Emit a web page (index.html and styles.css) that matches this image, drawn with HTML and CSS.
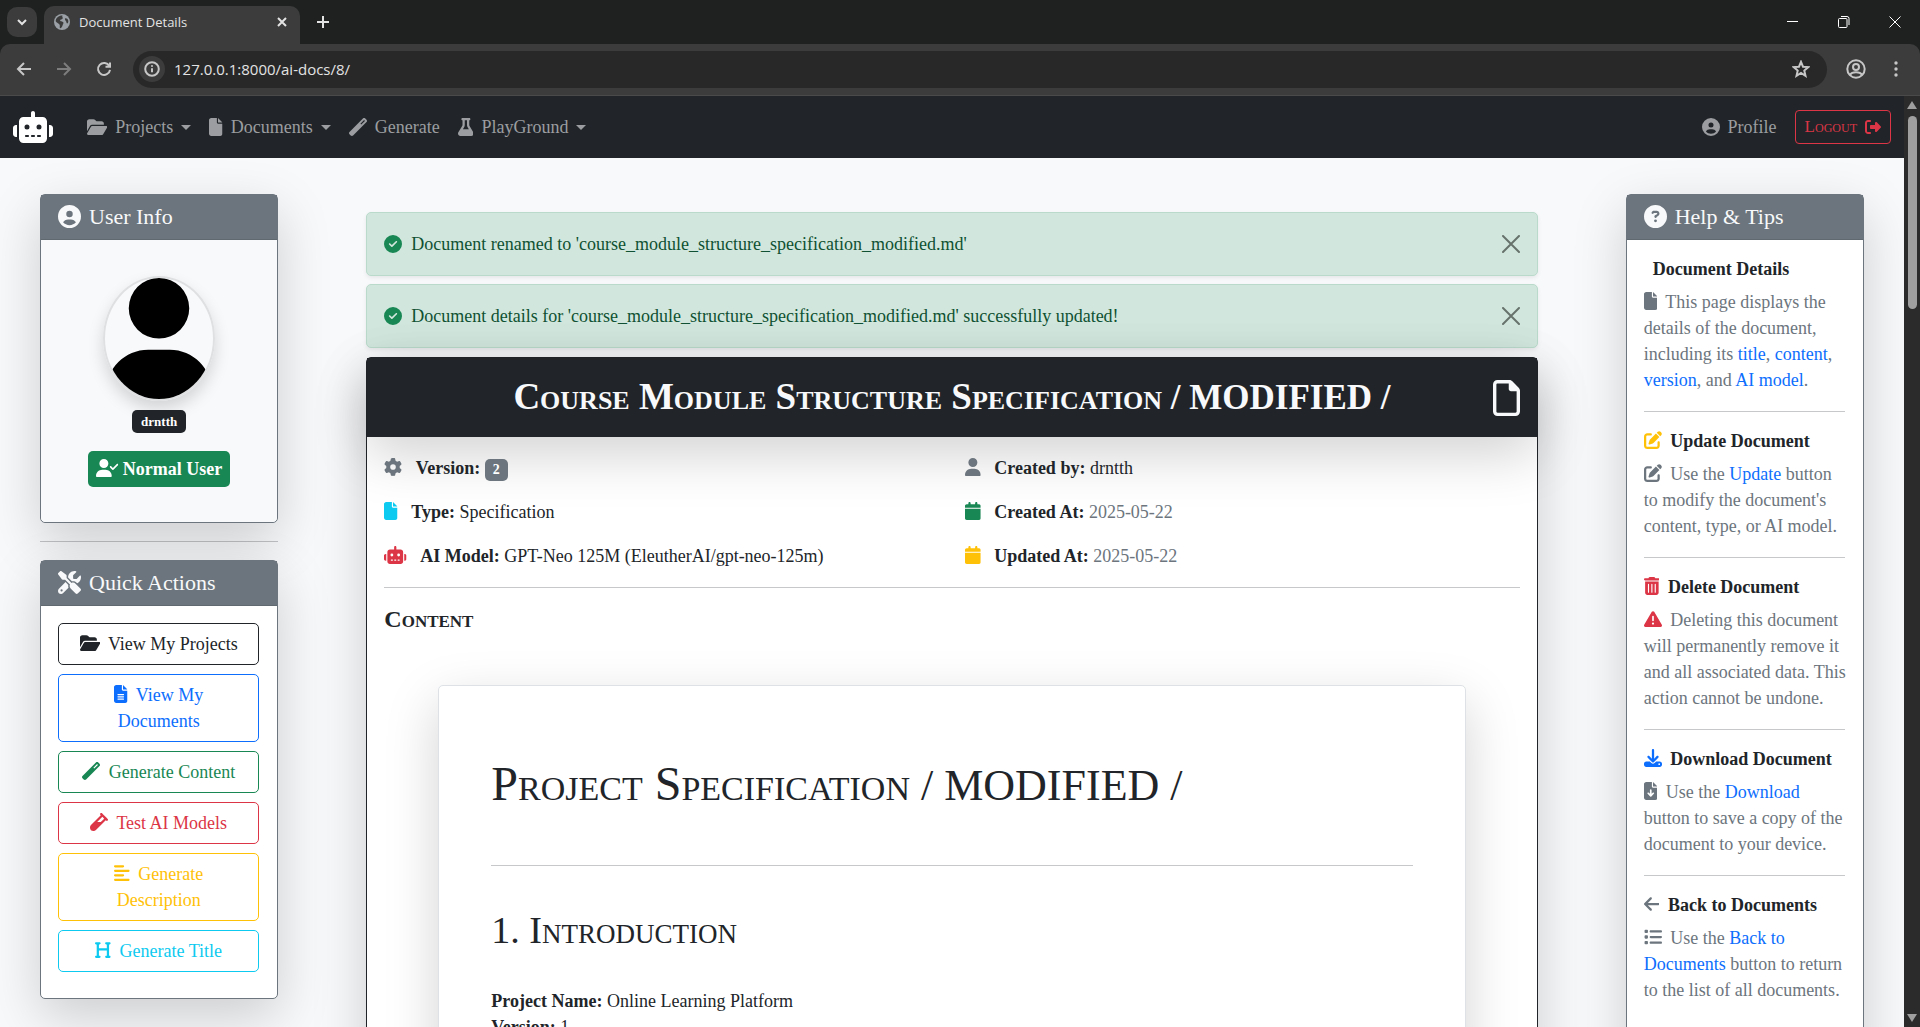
FILE: index.html
```html
<!DOCTYPE html>
<html lang="en">
<head>
<meta charset="utf-8">
<meta name="viewport" content="width=device-width, initial-scale=1">
<title>Document Details</title>
<link rel="stylesheet" href="styles.css">
</head>
<body>
<svg class="sprite" aria-hidden="true">
  <symbol id="robot" viewBox="0 0 640 512"><path d="M320 0c17.7 0 32 14.3 32 32V96H472c39.8 0 72 32.2 72 72V440c0 39.8-32.2 72-72 72H168c-39.8 0-72-32.2-72-72V168c0-39.8 32.2-72 72-72H288V32c0-17.7 14.3-32 32-32zM208 384c-8.8 0-16 7.2-16 16s7.2 16 16 16h32c8.8 0 16-7.2 16-16s-7.2-16-16-16H208zm96 0c-8.8 0-16 7.2-16 16s7.2 16 16 16h32c8.8 0 16-7.2 16-16s-7.2-16-16-16H304zm96 0c-8.8 0-16 7.2-16 16s7.2 16 16 16h32c8.8 0 16-7.2 16-16s-7.2-16-16-16H400zM264 256a40 40 0 1 0 -80 0 40 40 0 1 0 80 0zm152 40a40 40 0 1 0 0-80 40 40 0 1 0 0 80zM48 224H64V416H48c-26.5 0-48-21.5-48-48V272c0-26.5 21.5-48 48-48zm544 0c26.5 0 48 21.5 48 48v96c0 26.5-21.5 48-48 48H576V224h16z"/></symbol>
  <symbol id="folder-open" viewBox="0 0 576 512"><path d="M88.7 223.8L0 375.8V96C0 60.7 28.7 32 64 32H181.5c17 0 33.3 6.7 45.3 18.7l26.5 26.5c12 12 28.3 18.7 45.3 18.7H416c35.3 0 64 28.7 64 64v32H144c-22.8 0-43.8 12.1-55.3 31.8zm27.6 16.1C122.1 230 132.6 224 144 224H544c11.5 0 22 6.1 27.7 16.1s5.7 22.2-.1 32.1l-112 192C453.9 474 443.4 480 432 480H32c-11.5 0-22-6.1-27.7-16.1s-5.7-22.2 .1-32.1l112-192z"/></symbol>
  <symbol id="file" viewBox="0 0 384 512"><path d="M0 64C0 28.7 28.7 0 64 0H224V128c0 17.7 14.3 32 32 32H384V448c0 35.3-28.7 64-64 64H64c-35.3 0-64-28.7-64-64V64zm384 64H256V0L384 128z"/></symbol>
  <symbol id="file-lines" viewBox="0 0 384 512"><path d="M64 0C28.7 0 0 28.7 0 64V448c0 35.3 28.7 64 64 64H320c35.3 0 64-28.7 64-64V160H256c-17.7 0-32-14.3-32-32V0H64zM256 0V128H384L256 0zM112 256H272c8.8 0 16 7.2 16 16s-7.2 16-16 16H112c-8.8 0-16-7.2-16-16s7.2-16 16-16zm0 64H272c8.8 0 16 7.2 16 16s-7.2 16-16 16H112c-8.8 0-16-7.2-16-16s7.2-16 16-16zm0 64H272c8.8 0 16 7.2 16 16s-7.2 16-16 16H112c-8.8 0-16-7.2-16-16s7.2-16 16-16z"/></symbol>
  <symbol id="file-outline" viewBox="0 0 384 512"><path d="M320 464c8.8 0 16-7.2 16-16V160H256c-17.7 0-32-14.3-32-32V48H64c-8.8 0-16 7.2-16 16V448c0 8.8 7.2 16 16 16H320zM0 64C0 28.7 28.7 0 64 0H229.5c17 0 33.3 6.7 45.3 18.7l90.5 90.5c12 12 18.7 28.3 18.7 45.3V448c0 35.3-28.7 64-64 64H64c-35.3 0-64-28.7-64-64V64z"/></symbol>
  <symbol id="file-down" viewBox="0 0 384 512"><path d="M64 0C28.7 0 0 28.7 0 64V448c0 35.3 28.7 64 64 64H320c35.3 0 64-28.7 64-64V160H256c-17.7 0-32-14.3-32-32V0H64zM256 0V128H384L256 0zM216 232V334.1l31-31c9.4-9.4 24.6-9.4 33.9 0s9.4 24.6 0 33.9l-72 72c-9.4 9.4-24.6 9.4-33.9 0l-72-72c-9.4-9.4-9.4-24.6 0-33.9s24.6-9.4 33.9 0l31 31V232c0-13.3 10.7-24 24-24s24 10.7 24 24z"/></symbol>
  <symbol id="wand" viewBox="0 0 512 512"><path d="M14.1 463.3c-18.7-18.7-18.7-49.1 0-67.9L395.4 14.1c18.7-18.7 49.1-18.7 67.9 0l34.6 34.6c18.7 18.7 18.7 49.1 0 67.9L116.5 497.9c-18.7 18.7-49.1 18.7-67.9 0L14.1 463.3zM347.6 187.6l105-105L429.4 59.3l-105 105 23.3 23.3z"/></symbol>
  <symbol id="flask" viewBox="0 0 448 512"><path d="M288 0H160 128C110.3 0 96 14.3 96 32s14.3 32 32 32V196.8c0 11.8-3.3 23.5-9.5 33.5L10.3 406.2C3.6 417.2 0 429.7 0 442.6C0 480.9 31.1 512 69.4 512H378.6c38.3 0 69.4-31.1 69.4-69.4c0-12.8-3.6-25.4-10.3-36.4L329.5 230.4c-6.2-10.1-9.5-21.7-9.5-33.5V64c17.7 0 32-14.3 32-32s-14.3-32-32-32H288zM192 196.8V64h64V196.8c0 23.7 6.6 46.9 19 67.1L309.5 320h-171L173 263.9c12.4-20.2 19-43.4 19-67.1z"/></symbol>
  <symbol id="circle-user" viewBox="0 0 512 512"><path d="M399 384.2C376.9 345.8 335.4 320 288 320H224c-47.4 0-88.9 25.8-111 64.2c35.2 39.2 86.2 63.8 143 63.8s107.8-24.7 143-63.8zM0 256a256 256 0 1 1 512 0A256 256 0 1 1 0 256zm256 16a72 72 0 1 0 0-144 72 72 0 1 0 0 144z"/></symbol>
  <symbol id="sign-out" viewBox="0 0 512 512"><path d="M377.9 105.9L500.7 228.7c7.2 7.2 11.3 17.1 11.3 27.3s-4.1 20.1-11.3 27.3L377.9 406.1c-6.4 6.4-15 9.9-24 9.9c-18.7 0-33.9-15.2-33.9-33.9l0-62.1-128 0c-17.7 0-32-14.3-32-32l0-64c0-17.7 14.3-32 32-32l128 0 0-62.1c0-18.7 15.2-33.9 33.9-33.9c9 0 17.6 3.6 24 9.9zM160 96L96 96c-17.7 0-32 14.3-32 32l0 256c0 17.7 14.3 32 32 32l64 0c17.7 0 32 14.3 32 32s-14.3 32-32 32l-64 0c-53 0-96-43-96-96L0 128C0 75 43 32 96 32l64 0c17.7 0 32 14.3 32 32s-14.3 32-32 32z"/></symbol>
  <symbol id="user" viewBox="0 0 448 512"><path d="M224 256A128 128 0 1 0 224 0a128 128 0 1 0 0 256zm-45.7 48C79.8 304 0 383.8 0 482.3C0 498.7 13.3 512 29.7 512H418.3c16.4 0 29.7-13.3 29.7-29.7C448 383.8 368.2 304 269.7 304H178.3z"/></symbol>
  <symbol id="user-check" viewBox="0 0 640 512"><path d="M96 128a128 128 0 1 1 256 0A128 128 0 1 1 96 128zM0 482.3C0 383.8 79.8 304 178.3 304h91.4C368.2 304 448 383.8 448 482.3c0 16.4-13.3 29.7-29.7 29.7H29.7C13.3 512 0 498.7 0 482.3zM625 177L497 305c-9.4 9.4-24.6 9.4-33.9 0l-64-64c-9.4-9.4-9.4-24.6 0-33.9s24.6-9.4 33.9 0l47 47L591 143c9.4-9.4 24.6-9.4 33.9 0s9.4 24.6 0 33.9z"/></symbol>
  <symbol id="tools" viewBox="0 0 512 512"><path d="M78.6 5C69.1-2.4 55.6-1.5 47 7L7 47c-8.5 8.5-9.4 22-2.1 31.6l80 104c4.5 5.9 11.6 9.4 19 9.4h54.1l109 109c-14.7 29-10 65.4 14.3 89.6l112 112c12.5 12.5 32.8 12.5 45.3 0l64-64c12.5-12.5 12.5-32.8 0-45.3l-112-112c-24.2-24.2-60.6-29-89.6-14.3l-109-109V104c0-7.5-3.5-14.5-9.4-19L78.6 5zM19.9 396.1C7.2 408.8 0 426.1 0 444.1C0 481.6 30.4 512 67.9 512c18 0 35.3-7.2 48-19.9L233.7 374.3c-7.8-20.9-9-43.6-3.6-65.1l-61.7-61.7L19.9 396.1zM512 144c0-10.5-1.1-20.7-3.2-30.5c-2.4-11.2-16.1-14.1-24.2-6l-63.9 63.9c-3 3-7.1 4.7-11.3 4.7H352c-8.8 0-16-7.2-16-16V102.6c0-4.2 1.7-8.3 4.7-11.3l63.9-63.9c8.1-8.1 5.2-21.8-6-24.2C388.7 1.1 378.5 0 368 0C288.5 0 224 64.5 224 144l0 .8 85.3 85.3c36-9.1 75.8 .5 104 28.7L429 274.5c49-23 83-72.8 83-130.5zM56 432a24 24 0 1 1 48 0 24 24 0 1 1 -48 0z"/></symbol>
  <symbol id="vial" viewBox="0 0 512 512"><path d="M342.6 9.4c-12.5-12.5-32.8-12.5-45.3 0s-12.5 32.8 0 45.3l9.4 9.4L28.1 342.6C10.1 360.6 0 385 0 410.5V416c0 53 43 96 96 96h5.5c25.5 0 49.9-10.1 67.9-28.1L448 205.3l9.4 9.4c12.5 12.5 32.8 12.5 45.3 0s12.5-32.8 0-45.3l-32-32-96-96-32-32zM205.3 256L352 109.3 402.7 160l-96 96H205.3z"/></symbol>
  <symbol id="align-left" viewBox="0 0 448 512"><path d="M288 64c0 17.7-14.3 32-32 32H32C14.3 96 0 81.7 0 64S14.3 32 32 32H256c17.7 0 32 14.3 32 32zm0 256c0 17.7-14.3 32-32 32H32c-17.7 0-32-14.3-32-32s14.3-32 32-32H256c17.7 0 32 14.3 32 32zM0 192c0-17.7 14.3-32 32-32H416c17.7 0 32 14.3 32 32s-14.3 32-32 32H32c-17.7 0-32-14.3-32-32zM448 448c0 17.7-14.3 32-32 32H32c-17.7 0-32-14.3-32-32s14.3-32 32-32H416c17.7 0 32 14.3 32 32z"/></symbol>
  <symbol id="heading" viewBox="0 0 448 512"><path d="M0 64C0 46.3 14.3 32 32 32H80h48c17.7 0 32 14.3 32 32s-14.3 32-32 32H112V208H336V96H320c-17.7 0-32-14.3-32-32s14.3-32 32-32h48 48c17.7 0 32 14.3 32 32s-14.3 32-32 32H400V240 416h16c17.7 0 32 14.3 32 32s-14.3 32-32 32H368 320c-17.7 0-32-14.3-32-32s14.3-32 32-32h16V272H112V416h16c17.7 0 32 14.3 32 32s-14.3 32-32 32H80 32c-17.7 0-32-14.3-32-32s14.3-32 32-32H48V240 96H32C14.3 96 0 81.7 0 64z"/></symbol>
  <symbol id="circle-check" viewBox="0 0 512 512"><path d="M256 512A256 256 0 1 0 256 0a256 256 0 1 0 0 512zM369 209L241 337c-9.4 9.4-24.6 9.4-33.9 0l-64-64c-9.4-9.4-9.4-24.6 0-33.9s24.6-9.4 33.9 0l47 47L335 175c9.4-9.4 24.6-9.4 33.9 0s9.4 24.6 0 33.9z"/></symbol>
  <symbol id="circle-question" viewBox="0 0 512 512"><path d="M256 512A256 256 0 1 0 256 0a256 256 0 1 0 0 512zM169.8 165.3c7.9-22.3 29.1-37.3 52.8-37.3h58.3c34.9 0 63.1 28.3 63.1 63.1c0 22.6-12.1 43.5-31.7 54.8L280 264.4c-.2 13-10.9 23.6-24 23.6c-13.3 0-24-10.7-24-24V250.5c0-8.6 4.6-16.5 12.1-20.8l44.3-25.4c4.7-2.7 7.6-7.7 7.6-13.1c0-8.4-6.8-15.1-15.1-15.1H222.6c-3.4 0-6.4 2.1-7.5 5.3l-.4 1.2c-4.4 12.5-18.2 19-30.6 14.6s-19-18.2-14.6-30.6l.4-1.2zM224 352a32 32 0 1 1 64 0 32 32 0 1 1 -64 0z"/></symbol>
  <symbol id="gear" viewBox="0 0 512 512"><path d="M495.9 166.6c3.2 8.7 .5 18.4-6.4 24.6l-43.3 39.4c1.1 8.3 1.7 16.8 1.7 25.4s-.6 17.1-1.7 25.4l43.3 39.4c6.9 6.2 9.6 15.9 6.4 24.6c-4.4 11.9-9.7 23.3-15.8 34.3l-4.7 8.1c-6.6 11-14 21.4-22.1 31.2c-5.9 7.2-15.7 9.6-24.5 6.8l-55.7-17.7c-13.4 10.3-28.2 18.9-44 25.4l-12.5 57.1c-2 9.1-9 16.3-18.2 17.8c-13.8 2.3-28 3.5-42.5 3.5s-28.7-1.2-42.5-3.5c-9.2-1.5-16.2-8.7-18.2-17.8l-12.5-57.1c-15.8-6.5-30.6-15.1-44-25.4L83.1 425.9c-8.8 2.8-18.6 .3-24.5-6.8c-8.1-9.8-15.5-20.2-22.1-31.2l-4.7-8.1c-6.1-11-11.4-22.4-15.8-34.3c-3.2-8.7-.5-18.4 6.4-24.6l43.3-39.4C64.6 273.1 64 264.6 64 256s.6-17.1 1.7-25.4L22.4 191.2c-6.9-6.2-9.6-15.9-6.4-24.6c4.4-11.9 9.7-23.3 15.8-34.3l4.7-8.1c6.6-11 14-21.4 22.1-31.2c5.9-7.2 15.7-9.6 24.5-6.8l55.7 17.7c13.4-10.3 28.2-18.9 44-25.4l12.5-57.1c2-9.1 9-16.3 18.2-17.8C227.3 1.2 241.5 0 256 0s28.7 1.2 42.5 3.5c9.2 1.5 16.2 8.7 18.2 17.8l12.5 57.1c15.8 6.5 30.6 15.1 44 25.4l55.7-17.7c8.8-2.8 18.6-.3 24.5 6.8c8.1 9.8 15.5 20.2 22.1 31.2l4.7 8.1c6.1 11 11.4 22.4 15.8 34.3zM256 336a80 80 0 1 0 0-160 80 80 0 1 0 0 160z"/></symbol>
  <symbol id="calendar" viewBox="0 0 448 512"><path d="M96 32V64H48C21.5 64 0 85.5 0 112v48H448V112c0-26.5-21.5-48-48-48H352V32c0-17.7-14.3-32-32-32s-32 14.3-32 32V64H160V32c0-17.7-14.3-32-32-32S96 14.3 96 32zM448 192H0V464c0 26.5 21.5 48 48 48H400c26.5 0 48-21.5 48-48V192z"/></symbol>
  <symbol id="edit" viewBox="0 0 512 512"><path d="M471.6 21.7c-21.9-21.9-57.3-21.9-79.2 0L362.3 51.7l97.9 97.9 30.1-30.1c21.9-21.9 21.9-57.3 0-79.2L471.6 21.7zm-299.2 220c-6.1 6.1-10.8 13.6-13.5 21.9l-29.6 88.8c-2.9 8.6-.6 18.1 5.8 24.6s15.9 8.7 24.6 5.8l88.8-29.6c8.2-2.7 15.7-7.4 21.9-13.5L437.7 172.3 339.7 74.3 172.4 241.7zM96 64C43 64 0 107 0 160V416c0 53 43 96 96 96H352c53 0 96-43 96-96V320c0-17.7-14.3-32-32-32s-32 14.3-32 32v96c0 17.7-14.3 32-32 32H96c-17.7 0-32-14.3-32-32V160c0-17.7 14.3-32 32-32h96c17.7 0 32-14.3 32-32s-14.3-32-32-32H96z"/></symbol>
  <symbol id="trash" viewBox="0 0 448 512"><path d="M135.2 17.7C140.6 6.8 151.7 0 163.8 0H284.2c12.1 0 23.2 6.8 28.6 17.7L320 32h96c17.7 0 32 14.3 32 32s-14.3 32-32 32H32C14.3 96 0 81.7 0 64S14.3 32 32 32h96l7.2-14.3zM32 128H416V448c0 35.3-28.7 64-64 64H96c-35.3 0-64-28.7-64-64V128zm96 64c-8.8 0-16 7.2-16 16V432c0 8.8 7.2 16 16 16s16-7.2 16-16V208c0-8.8-7.2-16-16-16zm96 0c-8.8 0-16 7.2-16 16V432c0 8.8 7.2 16 16 16s16-7.2 16-16V208c0-8.8-7.2-16-16-16zm96 0c-8.8 0-16 7.2-16 16V432c0 8.8 7.2 16 16 16s16-7.2 16-16V208c0-8.8-7.2-16-16-16z"/></symbol>
  <symbol id="warning" viewBox="0 0 512 512"><path d="M256 32c14.2 0 27.3 7.5 34.5 19.8l216 368c7.3 12.4 7.3 27.7 .2 40.1S486.3 480 472 480H40c-14.3 0-27.6-7.7-34.7-20.1s-7-27.8 .2-40.1l216-368C228.7 39.5 241.8 32 256 32zm0 128c-13.3 0-24 10.7-24 24V296c0 13.3 10.7 24 24 24s24-10.7 24-24V184c0-13.3-10.7-24-24-24zm32 224a32 32 0 1 0 -64 0 32 32 0 1 0 64 0z"/></symbol>
  <symbol id="download" viewBox="0 0 512 512"><path d="M288 32c0-17.7-14.3-32-32-32s-32 14.3-32 32V274.7l-73.4-73.4c-12.5-12.5-32.8-12.5-45.3 0s-12.5 32.8 0 45.3l128 128c12.5 12.5 32.8 12.5 45.3 0l128-128c12.5-12.5 12.5-32.8 0-45.3s-32.8-12.5-45.3 0L288 274.7V32zM64 352c-35.3 0-64 28.7-64 64v32c0 35.3 28.7 64 64 64H448c35.3 0 64-28.7 64-64V416c0-35.3-28.7-64-64-64H346.5l-45.3 45.3c-25 25-65.5 25-90.5 0L165.5 352H64zm368 56a24 24 0 1 1 0 48 24 24 0 1 1 0-48z"/></symbol>
  <symbol id="arrow-left" viewBox="0 0 448 512"><path d="M9.4 233.4c-12.5 12.5-12.5 32.8 0 45.3l160 160c12.5 12.5 32.8 12.5 45.3 0s12.5-32.8 0-45.3L109.2 288 416 288c17.7 0 32-14.3 32-32s-14.3-32-32-32l-306.7 0L214.6 118.6c12.5-12.5 12.5-32.8 0-45.3s-32.8-12.5-45.3 0l-160 160z"/></symbol>
  <symbol id="list" viewBox="0 0 512 512"><path d="M40 48C26.7 48 16 58.7 16 72v48c0 13.3 10.7 24 24 24H88c13.3 0 24-10.7 24-24V72c0-13.3-10.7-24-24-24H40zM192 64c-17.7 0-32 14.3-32 32s14.3 32 32 32H480c17.7 0 32-14.3 32-32s-14.3-32-32-32H192zm0 160c-17.7 0-32 14.3-32 32s14.3 32 32 32H480c17.7 0 32-14.3 32-32s-14.3-32-32-32H192zm0 160c-17.7 0-32 14.3-32 32s14.3 32 32 32H480c17.7 0 32-14.3 32-32s-14.3-32-32-32H192zM16 232v48c0 13.3 10.7 24 24 24H88c13.3 0 24-10.7 24-24V232c0-13.3-10.7-24-24-24H40c-13.3 0-24 10.7-24 24zM40 368c-13.3 0-24 10.7-24 24v48c0 13.3 10.7 24 24 24H88c13.3 0 24-10.7 24-24V392c0-13.3-10.7-24-24-24H40z"/></symbol>
</svg>

<header class="browser">
  <div class="tabstrip">
    <button class="tab-search" aria-label="Search tabs"><svg width="10" height="10" viewBox="0 0 10 10" class="line"><path d="M1 3l4 4 4-4"/></svg></button>
    <div class="tab">
      <svg width="16" height="16" viewBox="0 0 16 16"><circle cx="8" cy="8" r="8" fill="#9aa0a6"/><path d="M8.500 1.500C7.500 3 9.500 3.500 8.500 4.700 7.800 5.600 6.300 5.200 6.100 6.400 5.900 7.500 8.700 7 9.300 8.200 9.900 9.400 8.800 10 8.600 11.200 8.400 12.400 7 14.500 6 14.200 5.300 13.200 6.300 11.500 5.500 10.500 4.700 9.500 2.500 9 1.700 7.300 1.600 4 5 1.300 8.500 1.500zM11.300 4.300c1-.4 2.500.4 2.900 2 .4 1.600-.2 3-.9 3.200-.9 0-.7-1.400-1.300-2.200-.6-.8-1.700-2.400-.7-3z" fill="#3c3c3c"/></svg>
      <span class="tab-title">Document Details</span>
      <button class="plain" aria-label="Close tab"><svg width="10" height="10" viewBox="0 0 10 10" class="line"><path d="M1 1l8 8M9 1l-8 8"/></svg></button>
    </div>
    <button class="plain new-tab" aria-label="New tab"><svg width="12" height="12" viewBox="0 0 12 12" class="line"><path d="M6 0v12M0 6h12"/></svg></button>
    <div class="window-controls">
      <button class="plain" aria-label="Minimize"><svg width="12" height="12" viewBox="0 0 12 12" class="thin"><path d="M0 5.500h11"/></svg></button>
      <button class="plain" aria-label="Restore"><svg width="12" height="12" viewBox="0 0 12 12" class="thin"><rect x=".5" y="2.500" width="8.500" height="9" rx="1"/><path d="M3 .5h6a2 2 0 0 1 2 2V9"/></svg></button>
      <button class="plain" aria-label="Close window"><svg width="12" height="12" viewBox="0 0 12 12" class="thin"><path d="M.5.5l11 11M11.500.5l-11 11"/></svg></button>
    </div>
  </div>
  <div class="toolbar">
    <button class="plain" aria-label="Back"><svg width="16" height="16" viewBox="0 0 16 16" class="line"><path d="M15 8H2M8 2L2 8l6 6"/></svg></button>
    <button class="plain dim" aria-label="Forward"><svg width="16" height="16" viewBox="0 0 16 16" class="line"><path d="M1 8h13M8 2l6 6-6 6"/></svg></button>
    <button class="plain" aria-label="Reload"><svg width="16" height="16" viewBox="0 0 16 16" class="line"><path d="M13.300 5A6 6 0 1 0 14 8.800M14 1.500v4.200H9.500"/></svg></button>
    <div class="omnibox">
      <span class="site-info"><svg width="16" height="16" viewBox="0 0 16 16" class="line"><circle cx="8" cy="8" r="6.800"/><path d="M8 7.200v4M8 4.300v1.500"/></svg></span>
      <input class="url" type="text" aria-label="Address" value="127.0.0.1:8000/ai-docs/8/">
      <button class="plain" aria-label="Bookmark"><svg width="18" height="18" viewBox="0 0 18 18" class="line"><path d="M9 1.800l2 4.900 5.300.4-4 3.500 1.200 5.200L9 13l-4.500 2.800 1.200-5.200-4-3.500 5.300-.4z"/></svg></button>
    </div>
    <button class="plain account" aria-label="Account"><svg width="20" height="20" viewBox="0 0 20 20" class="line"><circle cx="10" cy="10" r="8.700"/><circle cx="10" cy="8" r="3"/><path d="M4 16c2-3.600 10-3.600 12 0"/></svg></button>
    <button class="plain" aria-label="Menu"><svg width="4" height="16" viewBox="0 0 4 16" fill="#c7c7c7"><circle cx="2" cy="2" r="1.700"/><circle cx="2" cy="8" r="1.700"/><circle cx="2" cy="14" r="1.700"/></svg></button>
  </div>
</header>

<div class="viewport">
  <div class="page">
    <nav class="navbar">
      <a class="brand" href="#" aria-label="Home"><svg class="icon icon-xl" viewBox="0 0 640 512"><use href="#robot"/></svg></a>
      <a class="nav-link" href="#"><svg class="icon" viewBox="0 0 576 512"><use href="#folder-open"/></svg>Projects<span class="caret"></span></a>
      <a class="nav-link" href="#"><svg class="icon" viewBox="0 0 384 512"><use href="#file"/></svg>Documents<span class="caret"></span></a>
      <a class="nav-link" href="#"><svg class="icon" viewBox="0 0 512 512"><use href="#wand"/></svg>Generate</a>
      <a class="nav-link" href="#"><svg class="icon" viewBox="0 0 448 512"><use href="#flask"/></svg>PlayGround<span class="caret"></span></a>
      <a class="nav-link nav-end" href="#"><svg class="icon" viewBox="0 0 512 512"><use href="#circle-user"/></svg>Profile</a>
      <button class="logout">Logout<svg class="icon icon-sm" viewBox="0 0 512 512"><use href="#sign-out"/></svg></button>
    </nav>

    <main class="columns">
      <aside class="side side-left">
        <section class="card">
          <h2 class="card-head"><svg class="icon icon-md" viewBox="0 0 512 512"><use href="#circle-user"/></svg>User Info</h2>
          <div class="user-body">
            <svg class="avatar" viewBox="0 0 448 512" role="img" aria-label="User avatar"><use href="#user"/></svg>
            <span class="badge badge-dark">drntth</span>
            <span class="badge badge-role"><svg class="icon" viewBox="0 0 640 512"><use href="#user-check"/></svg>Normal User</span>
          </div>
        </section>
        <hr>
        <section class="card">
          <h2 class="card-head"><svg class="icon icon-md" viewBox="0 0 512 512"><use href="#tools"/></svg>Quick Actions</h2>
          <div class="actions">
            <a class="action dark" href="#"><svg class="icon" viewBox="0 0 576 512"><use href="#folder-open"/></svg> View My Projects</a>
            <a class="action blue" href="#"><svg class="icon" viewBox="0 0 384 512"><use href="#file-lines"/></svg> View My Documents</a>
            <a class="action green" href="#"><svg class="icon" viewBox="0 0 512 512"><use href="#wand"/></svg> Generate Content</a>
            <a class="action red" href="#"><svg class="icon" viewBox="0 0 512 512"><use href="#vial"/></svg> Test AI Models</a>
            <a class="action yellow" href="#"><svg class="icon" viewBox="0 0 448 512"><use href="#align-left"/></svg> Generate Description</a>
            <a class="action cyan" href="#"><svg class="icon" viewBox="0 0 448 512"><use href="#heading"/></svg> Generate Title</a>
          </div>
        </section>
      </aside>

      <div class="center">
        <div class="alert" role="alert">
          <svg class="icon green" viewBox="0 0 512 512"><use href="#circle-check"/></svg>
          <span class="alert-text">Document renamed to 'course_module_structure_specification_modified.md'</span>
          <button class="plain dismiss" aria-label="Close"><svg width="18" height="18" viewBox="0 0 18 18"><path d="M1 1l16 16M17 1L1 17"/></svg></button>
        </div>
        <div class="alert" role="alert">
          <svg class="icon green" viewBox="0 0 512 512"><use href="#circle-check"/></svg>
          <span class="alert-text">Document details for 'course_module_structure_specification_modified.md' successfully updated!</span>
          <button class="plain dismiss" aria-label="Close"><svg width="18" height="18" viewBox="0 0 18 18"><path d="M1 1l16 16M17 1L1 17"/></svg></button>
        </div>

        <article class="document">
          <header class="doc-head">
            <h1 class="doc-title"><span class="doc-name">Course Module Structure Specification</span> / MODIFIED /</h1>
            <svg class="icon icon-doc" viewBox="0 0 384 512"><use href="#file-outline"/></svg>
          </header>
          <div class="doc-body">
            <div class="meta">
              <p><svg class="icon grey" viewBox="0 0 512 512"><use href="#gear"/></svg> <strong>Version:</strong> <span class="badge badge-grey">2</span></p>
              <p><svg class="icon grey" viewBox="0 0 448 512"><use href="#user"/></svg> <strong>Created by:</strong> drntth</p>
              <p><svg class="icon cyan" viewBox="0 0 384 512"><use href="#file"/></svg> <strong>Type:</strong> Specification</p>
              <p><svg class="icon green" viewBox="0 0 448 512"><use href="#calendar"/></svg> <strong>Created At:</strong> <span class="grey">2025-05-22</span></p>
              <p><svg class="icon red" viewBox="0 0 640 512"><use href="#robot"/></svg> <strong>AI Model:</strong> GPT-Neo 125M (EleutherAI/gpt-neo-125m)</p>
              <p><svg class="icon yellow" viewBox="0 0 448 512"><use href="#calendar"/></svg> <strong>Updated At:</strong> <span class="grey">2025-05-22</span></p>
            </div>
            <hr>
            <h2 class="content-title">Content</h2>
            <div class="sheet">
              <h1 class="sheet-title"><span class="sheet-name">Project Specification</span> / MODIFIED /</h1>
              <hr>
              <h2 class="sheet-section">1. Introduction</h2>
              <p><strong>Project Name:</strong> Online Learning Platform<br><strong>Version:</strong> 1</p>
            </div>
          </div>
        </article>
      </div>

      <aside class="side side-right">
        <section class="card help">
          <h2 class="card-head"><svg class="icon icon-md" viewBox="0 0 512 512"><use href="#circle-question"/></svg>Help &amp; Tips</h2>
          <div class="tips">
            <h3 class="tip-title no-icon">Document Details</h3>
            <p><svg class="icon" viewBox="0 0 384 512"><use href="#file"/></svg> This page displays the details of the document, including its <a href="#">title</a>, <a href="#">content</a>, <a href="#">version</a>, and <a href="#">AI model</a>.</p>
            <hr>
            <h3 class="tip-title"><svg class="icon yellow" viewBox="0 0 512 512"><use href="#edit"/></svg> Update Document</h3>
            <p><svg class="icon" viewBox="0 0 512 512"><use href="#edit"/></svg> Use the <a href="#">Update</a> button to modify the document's content, type, or AI model.</p>
            <hr>
            <h3 class="tip-title"><svg class="icon red" viewBox="0 0 448 512"><use href="#trash"/></svg> Delete Document</h3>
            <p><svg class="icon red" viewBox="0 0 512 512"><use href="#warning"/></svg> Deleting this document will permanently remove it and all associated data. This action cannot be undone.</p>
            <hr>
            <h3 class="tip-title"><svg class="icon blue" viewBox="0 0 512 512"><use href="#download"/></svg> Download Document</h3>
            <p><svg class="icon" viewBox="0 0 384 512"><use href="#file-down"/></svg> Use the <a href="#">Download</a> button to save a copy of the document to your device.</p>
            <hr>
            <h3 class="tip-title"><svg class="icon grey" viewBox="0 0 448 512"><use href="#arrow-left"/></svg> Back to Documents</h3>
            <p><svg class="icon" viewBox="0 0 512 512"><use href="#list"/></svg> Use the <a href="#">Back to Documents</a> button to return to the list of all documents.</p>
          </div>
        </section>
      </aside>
    </main>
  </div>
  <div class="scrollbar" aria-hidden="true">
    <span class="scroll-up"></span>
    <span class="scroll-thumb"></span>
    <span class="scroll-down"></span>
  </div>
</div>
</body>
</html>
```
FILE: styles.css
```css
* { box-sizing: border-box; }

body {
  margin: 0;
  height: 100vh;
  display: flex;
  flex-direction: column;
  overflow: hidden;
  font: 18px/26px "Liberation Serif", "Times New Roman", serif;
  color: #212529;
  background: #f8f9fb;
}

h1, h2, h3, p { margin: 0; }
a { color: #0d6efd; text-decoration: none; }
button { font: inherit; color: inherit; }
hr { margin: 0; border: 0; border-top: 1px solid rgba(33, 37, 41, .25); }
svg { flex: none; }

.sprite { display: none; }
.plain { display: flex; padding: 0; border: 0; background: none; }

.icon { height: 18px; width: auto; fill: currentColor; vertical-align: -2px; }
.icon-sm { height: 16px; }
.icon-md { height: 23px; }
.icon-xl { height: 32px; }
.icon-doc { height: 36px; }

.grey { color: #6c757d; }
.blue { color: #0d6efd; }
.green { color: #198754; }
.red { color: #dc3545; }
.yellow { color: #ffc107; }
.cyan { color: #0dcaf0; }
.dark { color: #212529; }

/* Browser frame */
.browser { flex: none; background: #1f2120; color: #e3e3e3; }
.line { fill: none; stroke: currentColor; stroke-width: 2; }
.thin { fill: none; stroke: #fff; stroke-width: 1; }

.tabstrip { display: flex; align-items: center; height: 44px; padding-left: 7px; }
.tab-search {
  display: grid;
  place-items: center;
  width: 30px;
  height: 30px;
  margin-right: 7px;
  padding: 0;
  border: 0;
  border-radius: 10px;
  background: #3c3c3c;
}
.tab {
  align-self: flex-end;
  display: flex;
  align-items: center;
  gap: 9px;
  width: 256px;
  height: 38px;
  padding: 0 13px 6px 10px;
  border-radius: 10px 10px 0 0;
  background: #3c3c3c;
}
.tab-title { flex: 1; font: 13px/20px "Open Sans", sans-serif; white-space: nowrap; }
.new-tab { margin-left: 17px; }
.window-controls { display: flex; gap: 39px; margin-left: auto; padding-right: 19px; }

.toolbar {
  display: flex;
  align-items: center;
  gap: 24px;
  height: 52px;
  padding: 0 22px 1px 16px;
  border-bottom: 1px solid #4a4a4a;
  border-radius: 10px 10px 0 0;
  background: #3c3c3c;
  color: #c7c7c7;
}
.dim { color: #7d7d7d; }
.account { margin-right: 4px; }
.omnibox {
  flex: 1;
  display: flex;
  align-items: center;
  height: 37px;
  margin: 0 -5px 0 -3px;
  padding: 0 17px 0 6px;
  border-radius: 19px;
  background: #282828;
}
.site-info {
  display: grid;
  place-items: center;
  width: 26px;
  height: 26px;
  border-radius: 50%;
  background: #3c3c3c;
}
.url {
  flex: 1;
  min-width: 0;
  padding: 0 9px;
  border: 0;
  background: none;
  color: #e3e3e3;
  font: 15px/20px "Open Sans", sans-serif;
}

/* Page area and scrollbar */
.viewport { flex: 1; min-height: 0; display: flex; }
.page { flex: 1; min-width: 0; overflow: hidden; }
.scrollbar {
  display: flex;
  flex-direction: column;
  align-items: center;
  width: 16px;
  padding: 5px 0;
  background: #2b2b2b;
}
.scroll-up, .scroll-down { border: 5px solid transparent; }
.scroll-up { border-top: 0; border-bottom: 8px solid #9f9f9f; }
.scroll-down { border-bottom: 0; border-top: 8px solid #9f9f9f; }
.scroll-thumb { width: 9px; height: 21%; margin: 7px 0 auto; border-radius: 5px; background: #9f9f9f; }

/* Navbar */
.navbar {
  display: flex;
  align-items: center;
  gap: 18px;
  height: 62px;
  padding: 0 13px;
  background: #212529;
}
.brand { display: flex; margin-right: 16px; color: #fff; }
.nav-link { display: flex; align-items: center; gap: 8px; color: #9b9da0; }
.nav-end { margin-left: auto; }
.caret { border: 5px solid transparent; border-top-color: currentColor; border-bottom: 0; }
.logout {
  display: flex;
  align-items: center;
  gap: 8px;
  height: 34px;
  padding: 0 9px;
  border: 1px solid #dc3545;
  border-radius: 4px;
  background: none;
  color: #dc3545;
  font-size: 17px;
  font-variant: small-caps;
}

/* Columns */
.columns { display: grid; grid-template-columns: 2fr 8fr 2fr; align-items: start; }
.side { min-width: 0; padding-block: 36px; }
.side-left { padding-inline: 40px 39px; }
.side-right { padding-inline: 39px 40px; }
.side > hr { margin: 18px 0; }
.center { min-width: 0; padding: 54px 49px; }

.card {
  border: 1px solid #6c757d;
  border-radius: 5px;
  background: #fff;
  box-shadow: 0 18px 53px rgba(0, 0, 0, .175);
}
.card-head {
  display: flex;
  align-items: center;
  gap: 8px;
  height: 45px;
  padding: 0 17px 1px;
  border-bottom: 1px solid #616970;
  background: #6c757d;
  color: #f8f9fa;
  font-size: 22px;
  font-weight: 400;
}

/* User card */
.user-body {
  display: flex;
  flex-direction: column;
  align-items: center;
  padding: 36px 18px 35px;
  border-radius: 0 0 5px 5px;
  background: #f8f9fb;
}
.avatar {
  width: 112px;
  height: 125px;
  border: 2px solid #dee0e1;
  border-radius: 50%;
  box-shadow: 0 8px 16px rgba(0, 0, 0, .15);
}
.badge { border-radius: 5px; color: #fff; font-weight: 700; white-space: nowrap; }
.badge-dark { margin: 9px 0 18px; padding: 0 9px; background: #212529; font-size: 13px; line-height: 23px; }
.badge-role { padding: 0 8px; background: #198754; line-height: 36px; }
.badge-role .icon { margin-right: 4px; }
.badge-grey { display: inline-block; padding: 0 8px; background: #6c757d; font-size: 14px; line-height: 22px; }

/* Quick actions */
.actions { display: grid; gap: 9px; padding: 17px 18px 26px 17px; }
.action {
  padding: 7px 12px;
  border: 1px solid currentColor;
  border-radius: 5px;
  text-align: center;
}
.action .icon, .tips .icon { margin-right: 4px; }

/* Alerts */
.alert {
  display: flex;
  align-items: center;
  gap: 9px;
  min-height: 64px;
  margin-bottom: 8px;
  padding: 0 17px;
  border: 1px solid #badbcc;
  border-radius: 5px;
  background: #d1e7dd;
  color: #0f5132;
  box-shadow: 0 2px 4px rgba(0, 0, 0, .075);
}
.alert-text { flex: 1; }
.dismiss { opacity: .5; }
.dismiss svg { fill: none; stroke: #000; stroke-width: 2; stroke-linecap: round; }

/* Document */
.document {
  margin-top: 9px;
  border: 1px solid #212529;
  border-radius: 5px;
  background: #fff;
  box-shadow: 0 18px 53px rgba(0, 0, 0, .175);
}
.doc-head {
  display: grid;
  grid-template-columns: 1fr auto 1fr;
  align-items: center;
  height: 79px;
  padding: 0 17px;
  background: #212529;
  color: #f8f9fa;
  box-shadow: 0 18px 53px rgba(0, 0, 0, .175);
}
.doc-title {
  grid-column: 2;
  font-size: 35px;
  line-height: 42px;
  font-variant: small-caps;
}
.doc-name { font-size: 37px; }
.icon-doc { justify-self: end; }
.doc-body { padding: 18px 17px; }
.meta { display: grid; grid-template-columns: 1fr 1fr; gap: 18px 26px; margin-bottom: 18px; }
.meta .icon { margin-right: 9px; }
.content-title { margin: 18px 0 53px; font-size: 24px; line-height: 26px; font-variant: small-caps; }
.sheet {
  min-height: 600px;
  margin: 0 54px;
  padding: 71px 52px;
  border: 1px solid #dee2e6;
  border-radius: 5px;
  background: #fff;
  box-shadow: 0 18px 53px rgba(0, 0, 0, .175);
}
.sheet-title {
  margin-bottom: 53px;
  font-size: 44px;
  line-height: 53px;
  font-weight: 400;
  font-variant: small-caps;
}
.sheet-name { font-size: 48px; }
.sheet-section {
  margin: 43px 0 37px;
  font-size: 38px;
  line-height: 42px;
  font-weight: 400;
  font-variant: small-caps;
}

/* Help */
.help { min-height: 900px; }
.tips { padding: 18px 14px 18px 17px; color: #6c757d; }
.tips p { margin: 9px 0 18px; }
.tips hr { margin: 0 4px 18px 0; }
.tip-title { color: #212529; font-size: 18px; line-height: 22px; }
.no-icon { padding-left: 9px; }
```
